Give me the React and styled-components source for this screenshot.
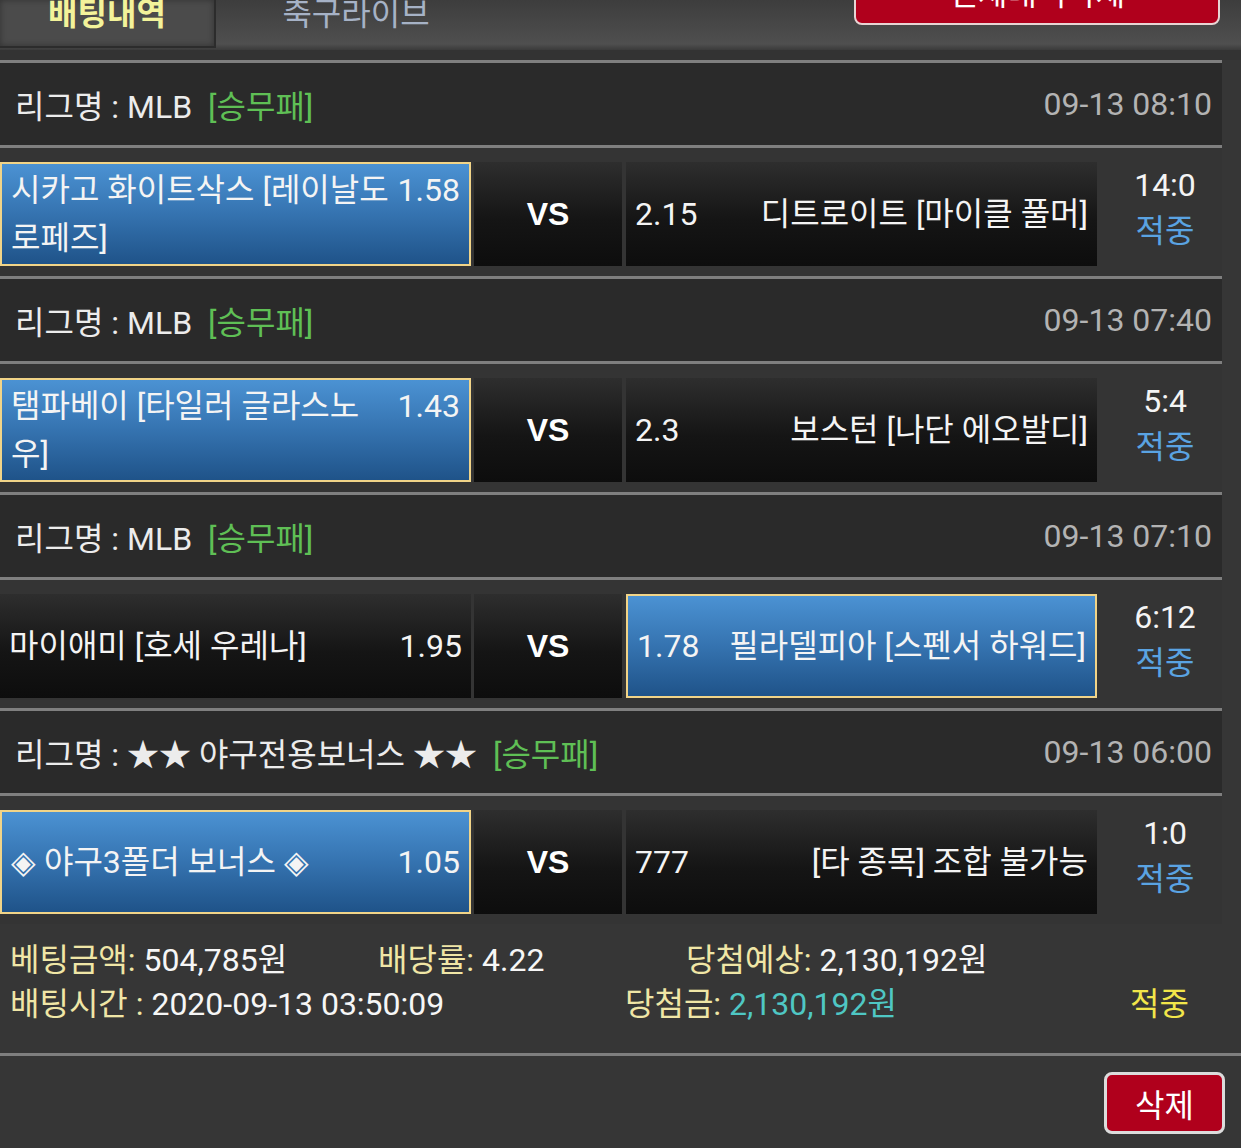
import React from "react";
import styled, { createGlobalStyle, css } from "styled-components";

const GlobalStyle = createGlobalStyle`
  html, body { margin: 0; padding: 0; }
  body {
    background: #363636;
    font-family: "Roboto", "Noto Sans CJK KR", "Noto Sans", sans-serif;
    color: #f2f2f2;
    overflow: hidden;
  }
  * { box-sizing: border-box; }
`;

const Page = styled.div`
  width: 1241px;
  min-height: 1148px;
  background: #363636;
`;

const Header = styled.div`
  height: 50px;
  display: flex;
  align-items: flex-start;
  overflow: hidden;
  background: linear-gradient(#3d3d3d 0%, #4f4f4f 88%, #3b3b3b 100%);
`;

const Tab = styled.div`
  width: 216px;
  height: 48px;
  display: flex;
  justify-content: center;
  align-items: flex-start;
  font-size: 32px;
  line-height: 40px;
  ${(p) =>
    p.$active
      ? css`
          background: #4b4b4b;
          border-right: 2px solid #2c2c2c;
          border-bottom: 2px solid #2c2c2c;
          box-shadow: inset 0 0 6px rgba(0, 0, 0, 0.35);
          color: #f3f39a;
          font-weight: 700;
        `
      : css`
          color: #a6b2c6;
          width: 280px;
        `}
`;

const TabLabel = styled.span`
  margin-top: -6px;
`;

const ClearAllButton = styled.button`
  margin: -23px 21px 0 auto;
  width: 366px;
  height: 48px;
  border: 2px solid #e7d4d4;
  border-radius: 8px;
  background: #b0001c;
  color: #ffffff;
  font-family: inherit;
  font-size: 32px;
  line-height: 30px;
  padding: 0;
  display: flex;
  align-items: flex-start;
  justify-content: center;
`;

const HeaderGap = styled.div`
  height: 10px;
  background: #333333;
`;

const List = styled.div`
  width: 1222px;
`;

const Divider = styled.div`
  height: 3px;
  background: #7f7f7f;
  ${(p) => p.$full && css`width: 1241px;`}
`;

const LeagueHeader = styled.div`
  height: 82px;
  background: #2a2a2a;
  display: flex;
  align-items: center;
  padding: 0 10px 0 15px;
  font-size: 32px;
`;

const LeagueName = styled.span`
  color: #ececec;
`;

const BetType = styled.span`
  color: #5fbf55;
  margin-left: 16px;
`;

const GameTime = styled.span`
  margin-left: auto;
  color: #b3b3b3;
`;

const MatchRow = styled.div`
  height: 128px;
  background: #343434;
  padding: 14px 0 10px;
  display: grid;
  grid-template-columns: 471px 148px 472px 1fr;
  column-gap: 3px;
  align-items: stretch;
`;

const cellBase = css`
  height: 104px;
  font-size: 32px;
  color: #f4f4f4;
  ${(p) =>
    p.$picked
      ? css`
          background: linear-gradient(#4b92d3 0%, #3573b0 50%, #1f5389 100%);
          border: 2px solid #f1d488;
          padding: 0 9px;
        `
      : css`
          background: linear-gradient(#2e2e2e 0%, #151515 55%, #0d0d0d 100%);
          padding: 0 9px;
        `}
`;

const HomeCell = styled.div`
  ${cellBase}
  display: flex;
  align-items: center;
`;

const HomeText = styled.div`
  width: 100%;
  line-height: 48px;
`;

const FloatOdds = styled.span`
  float: right;
  margin-left: 4px;
`;

const VsCell = styled.div`
  height: 104px;
  background: linear-gradient(#2e2e2e 0%, #151515 55%, #0d0d0d 100%);
  display: flex;
  align-items: center;
  justify-content: center;
  font-family: "Liberation Sans", Arial, sans-serif;
  font-weight: 700;
  font-size: 32px;
  color: #ffffff;
`;

const AwayCell = styled.div`
  ${cellBase}
  margin-left: 1px;
  display: flex;
  align-items: center;
  justify-content: space-between;
  gap: 20px;
  line-height: 48px;
`;

const AwayName = styled.span`
  text-align: right;
`;

const ResultCell = styled.div`
  display: flex;
  flex-direction: column;
  align-items: center;
  justify-content: center;
  font-size: 32px;
  line-height: 46px;
  padding: 0 0 16px 8px;
`;

const Score = styled.span`
  color: #f4f4f4;
`;

const Hit = styled.span`
  color: #5aa3e2;
`;

const Summary = styled.div`
  padding: 14px 0 27px 10px;
  font-size: 32px;
  line-height: 44px;
`;

const SummaryLine = styled.div`
  display: flex;
`;

const SummaryItem = styled.div`
  width: ${(p) => (p.$w ? `${p.$w}px` : "auto")};
  white-space: nowrap;
`;

const Label = styled.span`
  color: #f0e6a6;
`;

const Value = styled.span`
  color: ${(p) => p.$color || "#f6f6f6"};
`;

const ActionBar = styled.div`
  display: flex;
  justify-content: flex-end;
  padding: 16px 16px 0 0;
`;

const DeleteButton = styled.button`
  width: 121px;
  height: 62px;
  border: 3px solid #dcdcdc;
  border-radius: 8px;
  background: #b0001c;
  color: #ffffff;
  font-family: inherit;
  font-size: 32px;
  padding: 0;
`;

const games = [
  {
    league: "MLB",
    time: "09-13 08:10",
    home: "시카고 화이트삭스 [레이날도 로페즈]",
    homeOdds: "1.58",
    away: "디트로이트 [마이클 풀머]",
    awayOdds: "2.15",
    pick: "home",
    score: "14:0",
  },
  {
    league: "MLB",
    time: "09-13 07:40",
    home: "탬파베이 [타일러 글라스노우]",
    homeOdds: "1.43",
    away: "보스턴 [나단 에오발디]",
    awayOdds: "2.3",
    pick: "home",
    score: "5:4",
  },
  {
    league: "MLB",
    time: "09-13 07:10",
    home: "마이애미 [호세 우레나]",
    homeOdds: "1.95",
    away: "필라델피아 [스펜서 하워드]",
    awayOdds: "1.78",
    pick: "away",
    score: "6:12",
  },
  {
    league: "★★ 야구전용보너스 ★★",
    time: "09-13 06:00",
    home: "◈ 야구3폴더 보너스 ◈",
    homeOdds: "1.05",
    away: "[타 종목] 조합 불가능",
    awayOdds: "777",
    pick: "home",
    score: "1:0",
  },
];

export default function App() {
  return (
    <Page>
      <GlobalStyle />
      <Header>
        <Tab $active>
          <TabLabel>배팅내역</TabLabel>
        </Tab>
        <Tab>
          <TabLabel>축구라이브</TabLabel>
        </Tab>
        <ClearAllButton>전체내역삭제</ClearAllButton>
      </Header>
      <HeaderGap />
      <List>
        {games.map((g, i) => (
          <React.Fragment key={i}>
            <Divider />
            <LeagueHeader>
              <LeagueName>리그명 : {g.league}</LeagueName>
              <BetType>[승무패]</BetType>
              <GameTime>{g.time}</GameTime>
            </LeagueHeader>
            <Divider />
            <MatchRow>
              <HomeCell $picked={g.pick === "home"}>
                <HomeText>
                  <FloatOdds>{g.homeOdds}</FloatOdds>
                  {g.home}
                </HomeText>
              </HomeCell>
              <VsCell>VS</VsCell>
              <AwayCell $picked={g.pick === "away"}>
                <span>{g.awayOdds}</span>
                <AwayName>{g.away}</AwayName>
              </AwayCell>
              <ResultCell>
                <Score>{g.score}</Score>
                <Hit>적중</Hit>
              </ResultCell>
            </MatchRow>
          </React.Fragment>
        ))}
      </List>
      <Summary>
        <SummaryLine>
          <SummaryItem $w={368}>
            <Label>베팅금액:</Label> <Value>504,785원</Value>
          </SummaryItem>
          <SummaryItem $w={308}>
            <Label>배당률:</Label> <Value>4.22</Value>
          </SummaryItem>
          <SummaryItem>
            <Label>당첨예상:</Label> <Value>2,130,192원</Value>
          </SummaryItem>
        </SummaryLine>
        <SummaryLine>
          <SummaryItem $w={615}>
            <Label>배팅시간 :</Label> <Value>2020-09-13 03:50:09</Value>
          </SummaryItem>
          <SummaryItem $w={505}>
            <Label>당첨금:</Label> <Value $color="#4fc7c4">2,130,192원</Value>
          </SummaryItem>
          <SummaryItem>
            <Value $color="#f2e64a">적중</Value>
          </SummaryItem>
        </SummaryLine>
      </Summary>
      <Divider $full />
      <ActionBar>
        <DeleteButton>삭제</DeleteButton>
      </ActionBar>
    </Page>
  );
}
